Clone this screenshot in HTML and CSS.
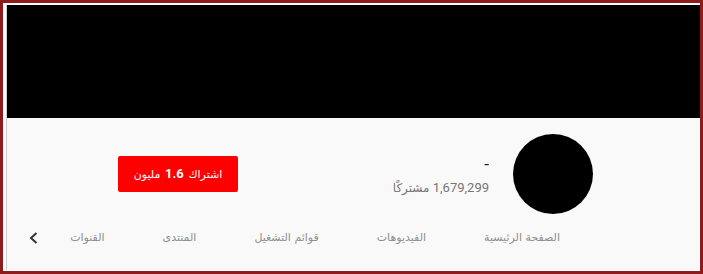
FILE: index.html
```html
<!DOCTYPE html>
<html lang="ar" dir="rtl">
<head>
<meta charset="utf-8">
<link rel="stylesheet" href="styles.css">
</head>
<body>
<div class="frame">
  <div class="inner">
    <div class="banner"></div>
    <div class="header">
      <div class="info">
        <div class="avatar"></div>
        <div class="meta">
          <div class="title">-</div>
          <div class="subs">1,679,299 <span class="ar">مشتركًا</span></div>
        </div>
        <button class="subscribe">اشتراك <b>1.6</b> مليون</button>
      </div>
      <div class="tabs">
        <div class="tab">الصفحة الرئيسية</div>
        <div class="tab">الفيديوهات</div>
        <div class="tab">قوائم التشغيل</div>
        <div class="tab">المنتدى</div>
        <div class="tab">القنوات</div>
        <div class="chev">
          <svg width="12" height="12" viewBox="0 0 12 12"><polyline points="8.5,1 3,6 8.5,11" fill="none" stroke="#333" stroke-width="2"/></svg>
        </div>
      </div>
    </div>
  </div>
</div>
</body>
</html>
```

FILE: styles.css
```css
html, body {
  margin: 0;
  padding: 0;
}
body {
  width: 703px;
  height: 274px;
  overflow: hidden;
  font-family: Roboto, "DejaVu Sans", sans-serif;
}
.frame {
  box-sizing: border-box;
  width: 703px;
  height: 274px;
  border: 3px solid #8e1c1c;
  background: #ffffff;
  padding: 2px 0 1px 3px;
}
.inner {
  height: 100%;
  border-left: 1px solid #cfcfcf;
  display: flex;
  flex-direction: column;
}
.banner {
  height: 113px;
  background: #000;
  flex: none;
}
.header {
  flex: 1;
  background: #f9f9f9;
  margin-right: 1px;
}
.info {
  display: flex;
  align-items: center;
  padding: 16px 106px 0 111px;
  height: 80px;
}
.avatar {
  width: 80px;
  height: 80px;
  border-radius: 50%;
  background: #000;
  flex: none;
  margin-left: 24px;
}
.meta {
  display: flex;
  flex-direction: column;
  margin-top: 2px;
}
.title {
  font-size: 17px;
  color: #222;
  line-height: 22px;
}
.subs {
  font-size: 13px;
  color: #767676;
  line-height: 18px;
  margin-top: 4px;
}
.subs .ar {
  font-size: 12px;
}
.subscribe {
  margin-right: auto;
  width: 120px;
  height: 36px;
  border: 0;
  border-radius: 2px;
  background: #ff0000;
  color: #fff;
  font-family: Roboto, "DejaVu Sans", sans-serif;
  font-size: 11px;
  padding: 0;
  margin-top: -1px;
}
.subscribe b {
  font-size: 13px;
  font-weight: 700;
  margin: 0 2px;
}
.tabs {
  display: flex;
  align-items: center;
  height: 48px;
  padding: 0 107px 0 21px;
}
.tab {
  flex: none;
  white-space: nowrap;
  padding: 0 29px;
  font-size: 11px;
  color: #8f8f8f;
  font-family: "DejaVu Sans", sans-serif;
  line-height: 20px;
}
.tab:first-child {
  padding-right: 32px;
}
.tab:nth-last-child(2) {
  padding-left: 10px;
}
.chev {
  margin-right: auto;
  display: flex;
  align-items: center;
}
```
